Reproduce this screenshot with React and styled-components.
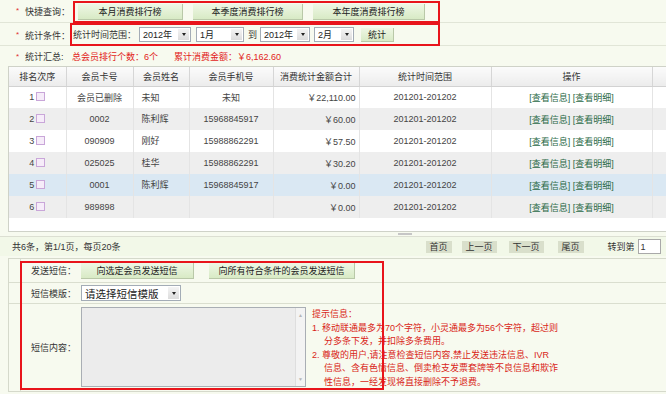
import React from 'react'
import styled, { createGlobalStyle } from 'styled-components'

const GlobalStyle = createGlobalStyle`
  html, body {
    margin: 0;
    padding: 0;
    background: #f7faef;
  }
  body {
    font-family: "Liberation Sans", "Noto Sans CJK SC", sans-serif;
    font-size: 9px;
    color: #333;
  }
  * { box-sizing: border-box; }
`

const Page = styled.div`
  width: 666px;
  height: 394px;
  overflow: hidden;
`

const Bar = styled.div`
  display: flex;
  align-items: ${p => p.$top ? 'flex-start' : 'center'};
  height: ${p => p.h}px;
  border-bottom: 1px solid #e1e5d7;
  padding-left: 16px;
  white-space: nowrap;
`

const Star = styled.span`
  color: #e03030;
  font-size: 8px;
  width: 9px;
`

const Label = styled.span`
  color: #333;
  width: ${p => p.w || 45}px;
  flex-shrink: 0;
`

const RedBox = styled.div`
  display: flex;
  align-items: center;
  gap: ${p => p.gap || 0}px;
  width: ${p => p.w}px;
  height: ${p => p.h}px;
  margin-top: ${p => p.mt || 0}px;
  margin-left: ${p => p.ml || 0}px;
  padding-left: ${p => p.pl || 0}px;
  border: 2px solid #e8141b;
  position: relative;
  z-index: 1;
`

const GreenButton = styled.div`
  width: ${p => p.w}px;
  height: ${p => p.h || 16}px;
  display: flex;
  align-items: center;
  justify-content: center;
  background: linear-gradient(#eef7e5, #d8eac5);
  border-right: 1px solid #b9c8a8;
  border-bottom: 1px solid #b9c8a8;
  color: #222;
  margin-left: ${p => p.ml || 0}px;
  flex-shrink: 0;
`

const Select = styled.div`
  width: ${p => p.w}px;
  height: ${p => p.h || 15}px;
  margin-left: ${p => p.ml || 0}px;
  display: flex;
  align-items: center;
  justify-content: space-between;
  background: #fff;
  border: 1px solid #a3acb6;
  padding: 1px 1px 1px 3px;
  font-size: ${p => p.fs || 9}px;
  color: #222;
  flex-shrink: 0;
`

const Arrow = styled.span`
  width: 11px;
  height: 100%;
  background: linear-gradient(#f4f4f4, #dcdcdc);
  display: flex;
  align-items: center;
  justify-content: center;
  &::after {
    content: '';
    border-left: 2.5px solid transparent;
    border-right: 2.5px solid transparent;
    border-top: 3px solid #222;
  }
`

const Plain = styled.span`
  margin-left: ${p => p.ml || 0}px;
  color: ${p => p.red ? '#e2231a' : '#333'};
`

const TableFrame = styled.div`
  margin-left: 8px;
  height: 166px;
  background: #fff;
  border: 1px solid #cfd2c8;
  border-right: none;
  overflow: hidden;
`

const Grid = styled.table`
  border-collapse: collapse;
  table-layout: fixed;
  width: 672px;
  th {
    height: 19px;
    font-weight: normal;
    color: #333;
    background: linear-gradient(#fbfbfb, #ececec);
    border-right: 1px solid #d6d6d6;
    border-bottom: 1px solid #d2d2d2;
  }
  td {
    height: 22px;
    border-right: 1px solid #e4e4e4;
    text-align: center;
    color: #444;
    padding: 0 3px;
  }
`

const Row = styled.tr`
  background: ${p => p.$tone === 'blue' ? '#dae8f3' : p.$tone === 'gray' ? '#eeeeee' : '#fff'};
`

const Cell = styled.td`
  && {
    text-align: ${p => p.align || 'center'};
    padding-left: ${p => p.pl || 3}px;
    vertical-align: ${p => p.$top ? 'top' : 'middle'};
    padding-top: ${p => p.$top ? 4 : 0}px;
  }
`

const Check = styled.span`
  display: inline-block;
  width: 9px;
  height: 9px;
  margin-left: 2px;
  vertical-align: -1px;
  border: 1px solid #c9a6d9;
  background: #f6ecf9;
`

const OpLink = styled.span`
  color: #2b6a47;
`

const ScrollStrip = styled.div`
  height: 4px;
  margin-left: 8px;
  position: relative;
  &::after {
    content: '';
    position: absolute;
    left: 390px;
    top: 1px;
    width: 14px;
    height: 2px;
    background: #c6c6c6;
  }
`

const Pager = styled.div`
  display: flex;
  align-items: center;
  height: 20px;
  padding-left: 12px;
  border-top: 1px solid #dcdfd2;
  background: #f2f8e8;
  white-space: nowrap;
`

const PageBtn = styled.span`
  height: 12px;
  padding: 0 ${p => p.px || 4}px;
  margin-left: ${p => p.ml}px;
  display: flex;
  align-items: center;
  background: #d9dfcb;
  color: #333;
`

const PageInput = styled.span`
  width: 23px;
  height: 15px;
  margin-left: 3px;
  background: #fff;
  border: 1px solid #a9a9a9;
  padding-left: 2px;
  display: flex;
  align-items: center;
`

const FormWrap = styled.div`
  position: relative;
  margin: 2px 0 0 8px;
  height: 134px;
  border: 1px solid #d5d9cb;
  border-right: none;
`

const FormRow = styled.div`
  display: grid;
  grid-template-columns: 12px 60px 1fr;
  height: ${p => p.h}px;
  border-bottom: ${p => p.last ? 'none' : '1px solid #dadecf'};
`

const Gutter = styled.div`
  border-right: 1px solid #dadecf;
`

const FormLabel = styled.div`
  display: flex;
  align-items: center;
  padding-left: 10px;
  color: #333;
`

const FormBody = styled.div`
  display: flex;
  align-items: ${p => p.$top ? 'flex-start' : 'center'};
  padding-top: ${p => p.$top ? 3 : 0}px;
`

const TextBox = styled.div`
  width: 225px;
  height: 80px;
  display: flex;
  justify-content: flex-end;
  background: #ececec;
  border: 1px solid #a9aeb4;
  flex-shrink: 0;
`

const ScrollTrack = styled.div`
  width: 10px;
  display: flex;
  flex-direction: column;
  justify-content: space-between;
  align-items: center;
  padding: 4px 0;
  background: #f3f3f3;
  border-left: 1px solid #dedede;
  color: #b5b5b5;
  font-size: 5px;
`

const Tips = styled.div`
  margin-left: 6px;
  margin-top: 1px;
  color: #d91e18;
  line-height: 13.6px;
  white-space: nowrap;
`

const TipLine = styled.div`
  padding-left: ${p => p.indent ? 12 : 0}px;
`

const Overlay = styled.div`
  position: absolute;
  left: 11px;
  top: 2px;
  width: 364px;
  height: 129px;
  border: 2px solid #e8141b;
  pointer-events: none;
`

const rows = [
  { n: 1, card: '会员已删除', name: '未知', phone: '未知', sum: '￥22,110.00' },
  { n: 2, card: '0002', name: '陈利辉', phone: '15968845917', sum: '￥60.00' },
  { n: 3, card: '090909', name: '刚好', phone: '15988862291', sum: '￥57.50' },
  { n: 4, card: '025025', name: '桂华', phone: '15988862291', sum: '￥30.20' },
  { n: 5, card: '0001', name: '陈利辉', phone: '15968845917', sum: '￥0.00' },
  { n: 6, card: '989898', name: '', phone: '', sum: '￥0.00' },
]

const tone = (n) => (n === 5 ? 'blue' : n % 2 === 0 ? 'gray' : 'white')

export default function App() {
  return (
    <Page>
      <GlobalStyle />

      <Bar h={23} $top>
        <Star style={{ marginTop: 6 }}>*</Star>
        <Label style={{ marginTop: 5 }}>快捷查询：</Label>
        <RedBox w={367} h={22} mt={1} ml={3} pl={3} gap={10}>
          <GreenButton w={105}>本月消费排行榜</GreenButton>
          <GreenButton w={110}>本季度消费排行榜</GreenButton>
          <GreenButton w={112}>本年度消费排行榜</GreenButton>
        </RedBox>
      </Bar>

      <Bar h={23} $top>
        <Star style={{ marginTop: 7 }}>*</Star>
        <Label style={{ marginTop: 6 }}>统计条件：</Label>
        <RedBox w={370} h={23} pl={1}>
          <Plain>统计时间范围：</Plain>
          <Select w={52} ml={3}>2012年<Arrow /></Select>
          <Select w={48} ml={5}>1月<Arrow /></Select>
          <Plain ml={4}>到</Plain>
          <Select w={50} ml={3}>2012年<Arrow /></Select>
          <Select w={40} ml={4}>2月<Arrow /></Select>
          <GreenButton w={33} h={14} ml={7}>统计</GreenButton>
        </RedBox>
      </Bar>

      <Bar h={20} style={{ borderBottom: 'none' }}>
        <Star>*</Star>
        <Label w={47}>统计汇总:</Label>
        <Plain red>总会员排行个数：6个</Plain>
        <Plain red ml={16}>累计消费金额：￥6,162.60</Plain>
      </Bar>

      <TableFrame>
        <Grid>
          <colgroup>
            <col style={{ width: 57 }} />
            <col style={{ width: 67 }} />
            <col style={{ width: 56 }} />
            <col style={{ width: 84 }} />
            <col style={{ width: 86 }} />
            <col style={{ width: 132 }} />
            <col style={{ width: 161 }} />
            <col style={{ width: 29 }} />
          </colgroup>
          <thead>
            <tr>
              <th>排名次序</th>
              <th>会员卡号</th>
              <th>会员姓名</th>
              <th>会员手机号</th>
              <th>消费统计金额合计</th>
              <th>统计时间范围</th>
              <th>操作</th>
              <th />
            </tr>
          </thead>
          <tbody>
            {rows.map(r => (
              <Row key={r.n} $tone={tone(r.n)}>
                <Cell>{r.n}<Check /></Cell>
                <Cell>{r.card}</Cell>
                <Cell align="left" pl={8} $top={r.n !== 1}>{r.name}</Cell>
                <Cell>{r.phone}</Cell>
                <Cell align="right">{r.sum}</Cell>
                <Cell>201201-201202</Cell>
                <Cell><OpLink>[查看信息]</OpLink> <OpLink>[查看明细]</OpLink></Cell>
                <Cell />
              </Row>
            ))}
          </tbody>
        </Grid>
      </TableFrame>
      <ScrollStrip />

      <Pager>
        <span>共6条，第1/1页，每页20条</span>
        <PageBtn ml={305}>首页</PageBtn>
        <PageBtn ml={10}>上一页</PageBtn>
        <PageBtn ml={12}>下一页</PageBtn>
        <PageBtn ml={14}>尾页</PageBtn>
        <Plain ml={24}>转到第</Plain>
        <PageInput>1</PageInput>
      </Pager>

      <FormWrap>
        <FormRow h={24}>
          <Gutter />
          <FormLabel>发送短信：</FormLabel>
          <FormBody>
            <GreenButton w={113}>向选定会员发送短信</GreenButton>
            <GreenButton w={146} ml={15}>向所有符合条件的会员发送短信</GreenButton>
          </FormBody>
        </FormRow>
        <FormRow h={21}>
          <Gutter />
          <FormLabel>短信模版：</FormLabel>
          <FormBody>
            <Select w={100} h={16} fs={10.5}>请选择短信模版<Arrow /></Select>
          </FormBody>
        </FormRow>
        <FormRow h={87} last>
          <Gutter />
          <FormLabel>短信内容：</FormLabel>
          <FormBody $top>
            <TextBox>
              <ScrollTrack><span>▲</span><span>▼</span></ScrollTrack>
            </TextBox>
            <Tips>
              <TipLine>提示信息：</TipLine>
              <TipLine>1. 移动联通最多为70个字符，小灵通最多为56个字符，超过则</TipLine>
              <TipLine indent>分多条下发，并扣除多条费用。</TipLine>
              <TipLine>2. 尊敬的用户,请注意检查短信内容,禁止发送违法信息、IVR</TipLine>
              <TipLine indent>信息、含有色情信息、倒卖枪支发票套牌等不良信息和欺诈</TipLine>
              <TipLine indent>性信息，一经发现将直接删除不予退费。</TipLine>
            </Tips>
          </FormBody>
        </FormRow>
        <Overlay />
      </FormWrap>
    </Page>
  )
}
